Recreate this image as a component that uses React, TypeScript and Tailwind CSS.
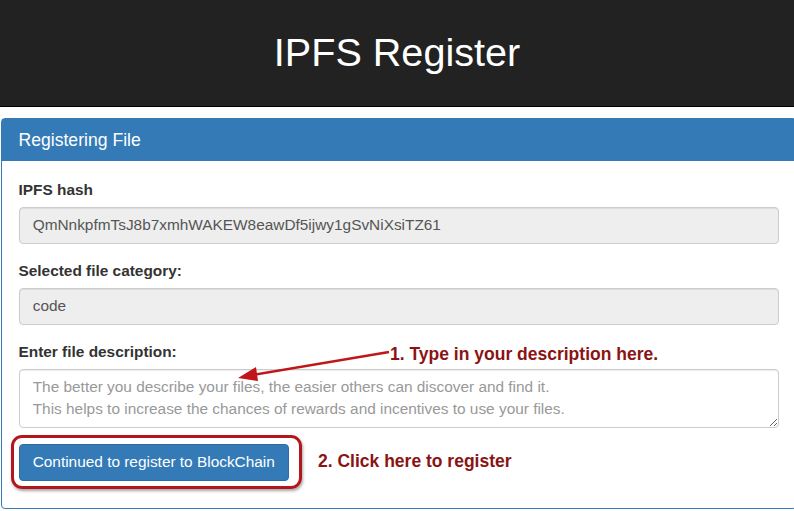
import React from "react";

const font = { fontFamily: '"Liberation Sans", Arial, Helvetica, sans-serif' };

const Field = ({ label, children }: { label: string; children: React.ReactNode }) => (
  <div className="mb-[16.5px]">
    <label className="block mb-[5.5px] text-[15.4px] leading-[22px] font-bold text-[#333]">{label}</label>
    {children}
  </div>
);

const ReadOnlyInput = ({ value }: { value: string }) => (
  <div className="h-[37px] w-full flex items-center px-[13.2px] rounded-[4px] border border-[#ccc] bg-[#eee] text-[15.4px] text-[#555] shadow-[inset_0_1px_1px_rgba(0,0,0,0.075)]">
    {value}
  </div>
);

export default function App() {
  return (
    <div className="relative w-[794px] h-[511px] overflow-hidden bg-white" style={font}>
      <header className="h-[107px] bg-[#222] border-b border-black flex items-center justify-center">
        <h1 className="text-[39.6px] leading-none text-white font-normal">IPFS Register</h1>
      </header>

      <div className="mt-[11px] ml-[1px] w-[796px] rounded-[4px] border border-[#337ab7] bg-white">
        <div className="h-[42px] flex items-center px-[16.5px] bg-[#337ab7] text-white text-[17.6px]">
          Registering File
        </div>
        <div className="pt-[18px] pl-[16.5px] pr-[17px] pb-[19px]">
          <Field label="IPFS hash">
            <ReadOnlyInput value="QmNnkpfmTsJ8b7xmhWAKEW8eawDf5ijwy1gSvNiXsiTZ61" />
          </Field>
          <Field label="Selected file category:">
            <ReadOnlyInput value="code" />
          </Field>
          <div>
            <label className="block mb-[5.5px] text-[15.4px] leading-[22px] font-bold text-[#333]">
              Enter file description:
            </label>
            <textarea
              rows={2}
              className="block w-full h-[59px] px-[13.2px] py-[6.6px] rounded-[4px] border border-[#ccc] bg-white text-[15.4px] leading-[22px] text-[#555] placeholder:text-[#999] shadow-[inset_0_1px_1px_rgba(0,0,0,0.075)]"
              style={font}
              placeholder={
                "The better you describe your files, the easier others can discover and find it.\nThis helps to increase the chances of rewards and incentives to use your files."
              }
            />
          </div>
          <div className="mt-[7px] flex items-center">
            <div className="-ml-[8px] pl-[5px] pr-[10px] pt-[6px] pb-[5px] rounded-[11px] border-[3px] border-[#b3171b] shadow-[1px_2px_3px_rgba(0,0,0,0.35)]">
              <button className="h-[37px] px-[13.2px] rounded-[4px] border border-[#2e6da4] bg-[#337ab7] text-white text-[15.4px]">
                Continued to register to BlockChain
              </button>
            </div>
            <span className="ml-[16px] text-[17.5px] font-bold text-[#8a1414]">2. Click here to register</span>
          </div>
        </div>
      </div>

      <span className="absolute left-[390px] top-[343px] text-[17.5px] leading-[22px] font-bold text-[#8a1414]">
        1. Type in your description here.
      </span>
      <svg className="absolute left-0 top-0 pointer-events-none" width="794" height="511">
        <line x1="389" y1="352" x2="252" y2="375" stroke="#c0161b" strokeWidth="2.5" />
        <polygon points="238,378 256,367 258,381" fill="#c0161b" />
      </svg>
    </div>
  );
}
